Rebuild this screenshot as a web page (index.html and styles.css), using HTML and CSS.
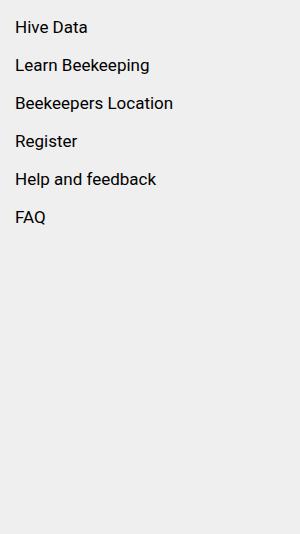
FILE: index.html
```html
<!DOCTYPE html>
<html>
  <head>
    <meta charset="UTF-8">
    <title>Menu</title>
    <link rel="stylesheet" href="styles.css">
  </head>
  <body>
    <ul class="menu">
      <li class="menuItem">Hive Data</li>
      <li class="menuItem">Learn Beekeeping</li>
      <li class="menuItem">Beekeepers Location</li>
      <li class="menuItem">Register</li>
      <li class="menuItem">Help and feedback</li>
      <li class="menuItem">FAQ</li>
    </ul>
  </body>
</html>
```

FILE: styles.css
```css
html, body {
  margin: 0;
  height: 100%;
  background: #efefef;
}

body {
  font-family: Roboto, "Noto Sans", sans-serif;
}

.menu {
  list-style: none;
  margin: 0;
  padding: 8px 0 0 0;
}

.menu .menuItem {
  height: 38px;
  line-height: 38px;
  padding-left: 15px;
  font-size: 17px;
  color: #000;
}
```
